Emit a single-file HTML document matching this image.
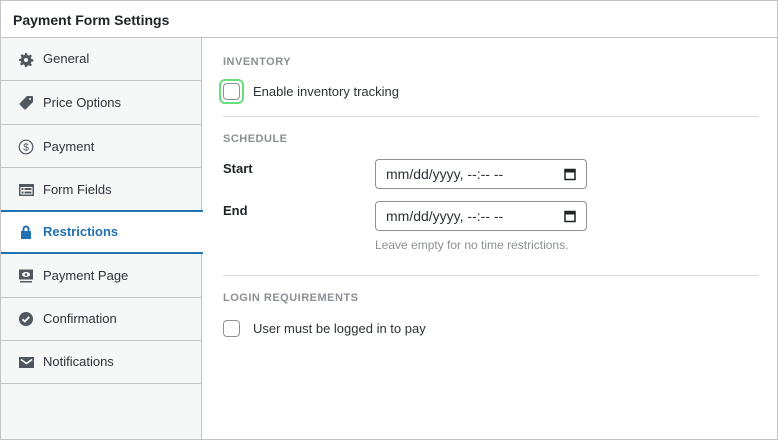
<!DOCTYPE html>
<html><head><style>
*{box-sizing:border-box;margin:0;padding:0}
body{width:778px;height:440px;background:#fff;font-family:"Liberation Sans",sans-serif;color:#1d2327;position:relative;overflow:hidden}
.wrap{position:absolute;left:0;top:0;width:778px;height:440px;border:1px solid #c3c4c7}
.hdr{position:absolute;left:0;top:0;width:776px;height:37px;border-bottom:1px solid #c3c4c7;font-size:14px;font-weight:bold;padding:11px 12px}
.side{position:absolute;left:0;top:37px;width:201px;height:401px;background:#f6f7f7;border-right:1px solid #c3c4c7}
.it{position:absolute;left:0;width:201px;height:44px;border-bottom:1px solid #c3c4c7;font-size:13px;color:#2c3338;padding-left:42px;line-height:43px}
.it svg{position:absolute;left:17px;top:14px;width:16px;height:16px}
.act{background:#fff;color:#2271b1;font-weight:bold;border-top:2px solid #2271b1;border-bottom:2px solid #2271b1;width:202px;line-height:40px}
.lbl{position:absolute;left:222px;font-size:11px;font-weight:bold;color:#8c8f94;letter-spacing:.5px}
.cb{position:absolute;left:222px;width:17px;height:17px;border:1px solid #8c8f94;border-radius:4px;background:#fff}
.t{position:absolute;font-size:13px;color:#2c3338}
.sep{position:absolute;left:222px;width:535px;height:1px;background:#dcdcde}
.inp{position:absolute;left:374px;width:212px;height:30px;border:1px solid #8c8f94;border-radius:4px;font-size:14px;padding:6px 10px;color:#2c3338}
.inp svg{position:absolute;right:10px;top:8px}
</style></head><body>
<div class="wrap">
<div class="hdr">Payment Form Settings</div>
<div class="side">
<div class="it" style="top:0;height:43px;line-height:42px"><svg viewBox="0 0 16 16"><path fill="#50575e" d="M7 1h2l.4 2 1.4.6 1.7-1.1 1.4 1.4-1.1 1.7.6 1.4 2 .4v2l-2 .4-.6 1.4 1.1 1.7-1.4 1.4-1.7-1.1-1.4.6L9 15H7l-.4-2-1.4-.6-1.7 1.1-1.4-1.4 1.1-1.7L2.6 9 1 9V7l2-.4.6-1.4-1.1-1.7 1.4-1.4 1.7 1.1L7 2.6zM8 6a2 2 0 100 4 2 2 0 000-4z"/></svg>General</div>
<div class="it" style="top:43px"><svg viewBox="0 0 16 16"><path fill="#50575e" d="M9 1h5a1 1 0 011 1v5L8 14a1.4 1.4 0 01-2 0L2 10a1.4 1.4 0 010-2zm3 2a1 1 0 100 2 1 1 0 000-2z"/></svg>Price Options</div>
<div class="it" style="top:87px;height:43px"><svg viewBox="0 0 16 16"><circle cx="8" cy="8" r="6.8" fill="none" stroke="#50575e" stroke-width="1.2"/><text x="8" y="11.5" font-size="10" text-anchor="middle" fill="#50575e" font-family="Liberation Sans">$</text></svg>Payment</div>
<div class="it" style="top:130px;height:42px;border-bottom:none"><svg viewBox="0 0 16 16"><rect x="1" y="2" width="15" height="12" fill="#50575e"/><rect x="2.5" y="5" width="12" height="7.5" fill="#fff"/><rect x="3.5" y="6" width="2" height="2" fill="#50575e"/><rect x="6.5" y="6" width="7" height="2" fill="#50575e"/><rect x="3.5" y="9.5" width="2" height="2" fill="#50575e"/><rect x="6.5" y="9.5" width="7" height="2" fill="#50575e"/></svg>Form Fields</div>
<div class="it act" style="top:172px"><svg viewBox="0 0 16 16" style="top:12px"><path fill="#2271b1" d="M4.5 7V5a3.5 3.5 0 017 0v2H13v8H3V7zm2 0h3V5a1.5 1.5 0 00-3 0z"/></svg>Restrictions</div>
<div class="it" style="top:216px"><svg viewBox="0 0 16 16"><rect x="1" y="1.5" width="14" height="10" fill="#50575e"/><ellipse cx="8" cy="6.5" rx="4" ry="2.5" fill="#fff"/><circle cx="8" cy="6.5" r="1.3" fill="#50575e"/><rect x="2" y="13" width="12" height="1.5" fill="#50575e"/></svg>Payment Page</div>
<div class="it" style="top:259px"><svg viewBox="0 0 16 16"><circle cx="8" cy="8" r="7" fill="#50575e"/><path d="M4.5 8.3l2.3 2.2 4.5-4.6" fill="none" stroke="#fff" stroke-width="1.8"/></svg>Confirmation</div>
<div class="it" style="top:302px"><svg viewBox="0 0 16 16"><rect x="1" y="3" width="15" height="11" fill="#50575e"/><path d="M3 5.5l5.5 4 5.5-4" fill="none" stroke="#fff" stroke-width="1.6"/></svg>Notifications</div>
</div>
<div class="lbl" style="top:55px">INVENTORY</div>
<div style="position:absolute;left:218px;top:78px;width:25px;height:25px;border:2px solid #68de7c;border-radius:6px"></div>
<div class="cb" style="top:82px"></div>
<div class="t" style="left:252px;top:83px">Enable inventory tracking</div>
<div class="sep" style="top:115px"></div>
<div class="lbl" style="top:132px">SCHEDULE</div>
<div class="t" style="left:222px;top:160px;font-weight:bold;color:#1d2327">Start</div>
<div class="inp" style="top:158px">mm/dd/yyyy, --:-- --<svg width="12" height="13" viewBox="0 0 12 13"><rect x="1" y="1.5" width="10" height="10" fill="none" stroke="#1d2327" stroke-width="1.5"/><rect x="1" y="1.5" width="10" height="3" fill="#1d2327"/></svg></div>
<div class="t" style="left:222px;top:202px;font-weight:bold;color:#1d2327">End</div>
<div class="inp" style="top:200px">mm/dd/yyyy, --:-- --<svg width="12" height="13" viewBox="0 0 12 13"><rect x="1" y="1.5" width="10" height="10" fill="none" stroke="#1d2327" stroke-width="1.5"/><rect x="1" y="1.5" width="10" height="3" fill="#1d2327"/></svg></div>
<div class="t" style="left:374px;top:237px;font-size:12px;color:#8c8f94">Leave empty for no time restrictions.</div>
<div class="sep" style="top:274px"></div>
<div class="lbl" style="top:291px">LOGIN REQUIREMENTS</div>
<div class="cb" style="top:319px"></div>
<div class="t" style="left:252px;top:320px">User must be logged in to pay</div>
</div>
</body></html>
